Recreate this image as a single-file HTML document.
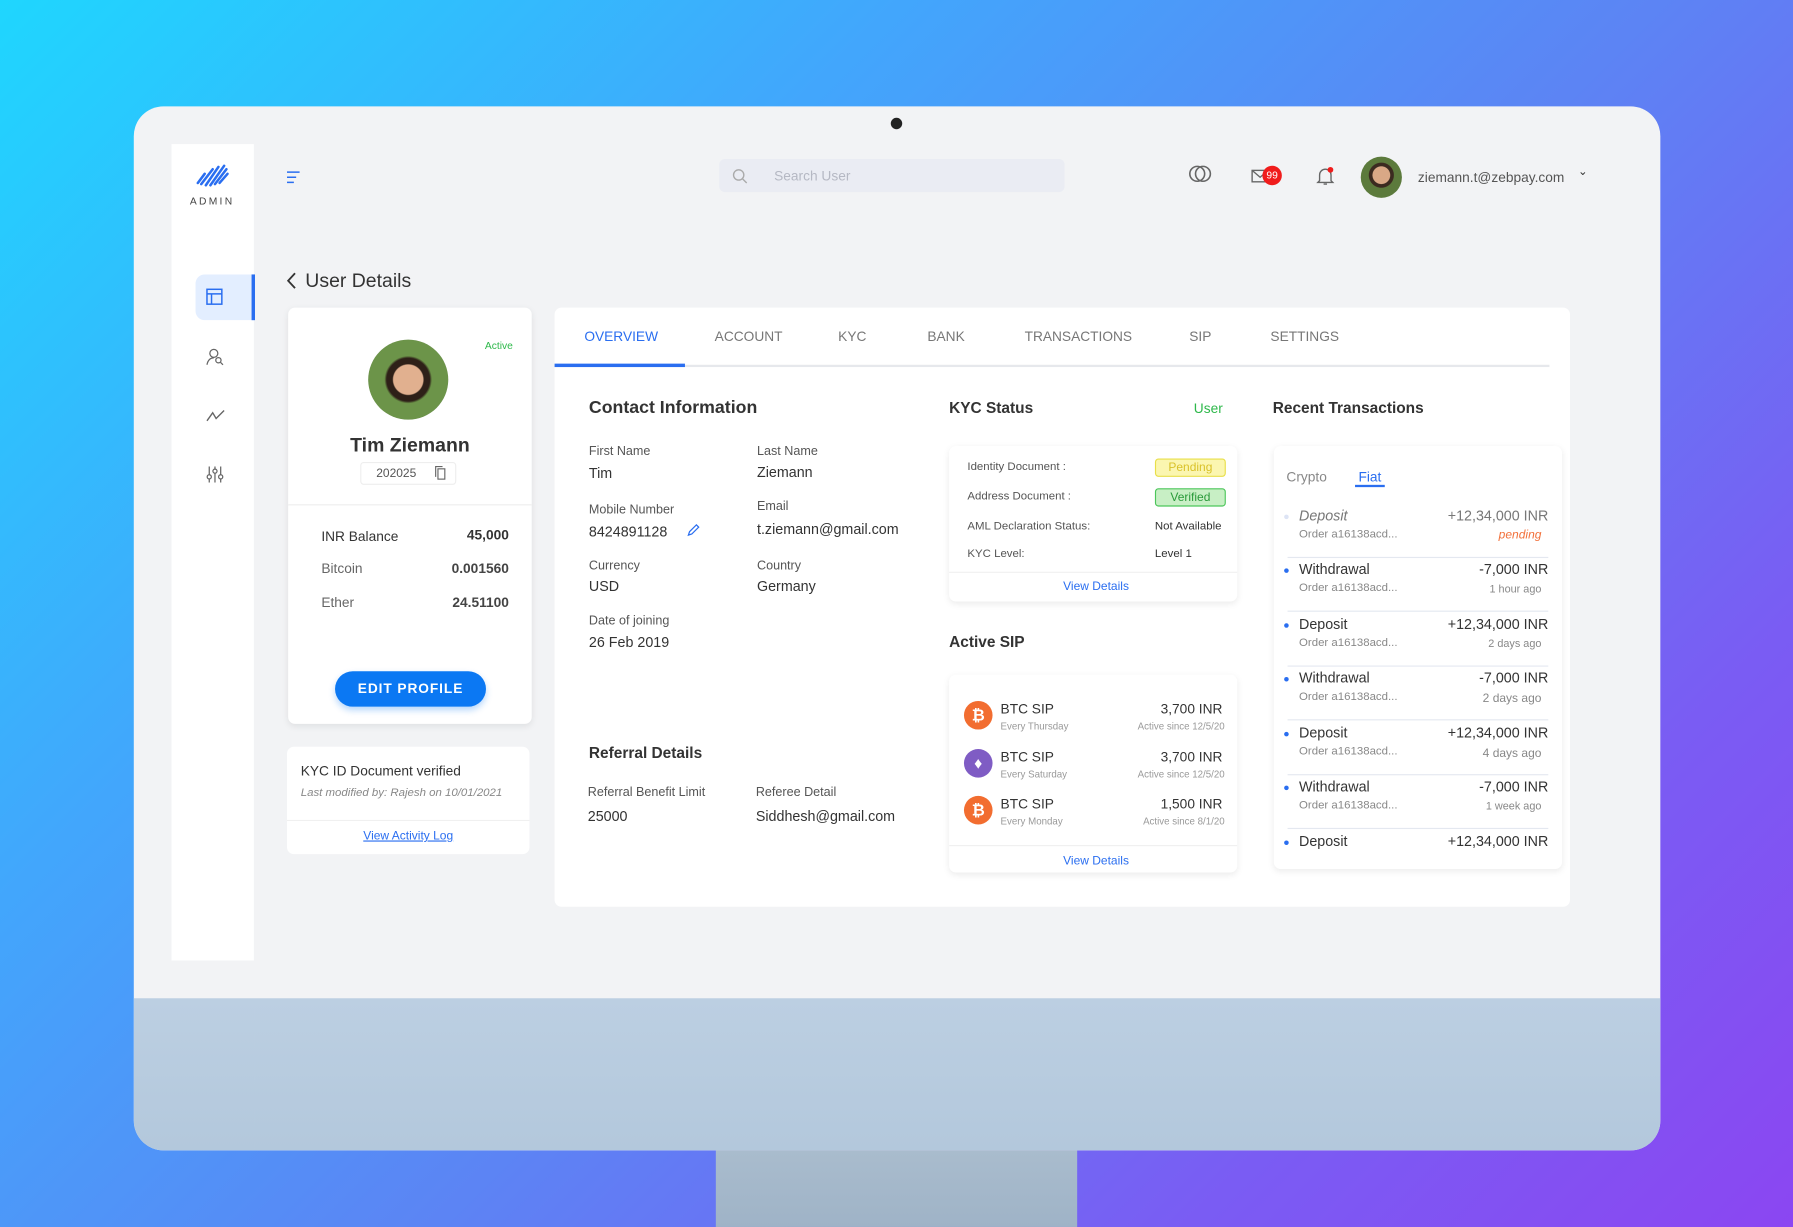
<!DOCTYPE html>
<html><head><meta charset="utf-8"><style>
*{box-sizing:border-box;margin:0;padding:0}
html,body{width:1793px;height:1227px;overflow:hidden}
body{background:linear-gradient(135deg,#1fd6fe 0%,#42a6fc 30%,#5c84f4 55%,#7a5cf3 80%,#8b46f2 100%);font-family:"Liberation Sans",sans-serif;color:#333}
#w{position:absolute;left:0;top:0;width:1568px;height:1073px;transform:scale(1.14349);transform-origin:0 0}
.a{position:absolute}
.mon{left:117px;top:93px;width:1335px;height:913px;border-radius:26px;background:#f2f3f5;overflow:hidden}
.chin{left:0;top:780px;width:1335px;height:133px;background:linear-gradient(#bccfe2,#b3c8dc)}
.stand{left:626px;top:1006px;width:316px;height:67px;background:linear-gradient(#a9bccd,#9fb3c7)}
.card{background:#fff;border-radius:6px;box-shadow:0 2px 6px rgba(0,0,0,.08)}
.lbl{font-size:11px;color:#555}
.val{font-size:12.5px;color:#333}
.tab{font-size:12px;color:#777;top:287px}
.h{font-weight:bold;color:#333}
.badge{font-size:10.5px;text-align:center;border-radius:3px;width:62px;height:16px;line-height:14px}
.tx{left:1126px;width:228px;height:44px;border-bottom:1px solid #e4e8f0}
.tx .n{position:absolute;left:10px;top:0;font-size:12.5px;color:#333}
.tx .d{position:absolute;left:-3px;top:6px;width:4px;height:4px;border-radius:50%;background:#2a6ef0}
.tx .o{position:absolute;left:10px;top:18px;font-size:10px;color:#888}
.tx .m{position:absolute;right:0;top:0;font-size:12.5px;color:#333}
.tx .t{position:absolute;right:6px;top:19px;font-size:9.5px;color:#888}
.sip .ic{position:absolute;left:0;width:25px;height:25px;border-radius:50%;background:#f26d30;color:#fff;font-weight:bold;font-size:14px;text-align:center;line-height:25px}
</style></head><body><div id="w">
<div class="a mon">
 <div class="a chin"></div>
</div>
<div class="a stand"></div>
<div class="a" style="left:779px;top:103px;width:10px;height:10px;border-radius:50%;background:#222"></div>

<div class="a" style="left:150px;top:126px;width:72px;height:714px;background:#fff"></div>
<svg class="a" style="left:170px;top:140px" width="32" height="24" viewBox="0 0 32 24"><g stroke="#2a6ef0" stroke-width="2.2" stroke-linecap="round"><path d="M3 20 L9 12"/><path d="M6 21 L16 8"/><path d="M10 22 L21 6"/><path d="M14 22 L26 5"/><path d="M18 21 L28 8"/><path d="M22 20 L29 12"/></g></svg>
<div class="a" style="left:166px;top:171px;font-size:9px;letter-spacing:2px;color:#444">ADMIN</div>
<div class="a" style="left:171px;top:240px;width:52px;height:40px;background:#e3eeff;border-radius:8px 0 0 8px"></div>
<div class="a" style="left:220px;top:240px;width:3px;height:40px;background:#2a6ef0"></div>
<svg class="a" style="left:180px;top:252px" width="15" height="15"><rect x="1" y="1" width="13" height="13" fill="none" stroke="#2a6ef0" stroke-width="1.3"/><path d="M1 5H14M5 5V14" stroke="#2a6ef0" stroke-width="1.3"/></svg>
<svg class="a" style="left:180px;top:304px" width="16" height="16" fill="none" stroke="#666" stroke-width="1.1"><circle cx="7" cy="5" r="3.5"/><path d="M1 15c1-5 4-6 6-6"/><circle cx="11" cy="11" r="2.3"/><path d="M12.8 12.8L15 15"/></svg>
<svg class="a" style="left:180px;top:357px" width="17" height="12" fill="none" stroke="#666" stroke-width="1.2"><path d="M1 11L6 4L9 9L16 2"/></svg>
<svg class="a" style="left:180px;top:407px" width="16" height="16" fill="none" stroke="#666" stroke-width="1.1"><path d="M3 1V15M8 1V15M13 1V15"/><circle cx="3" cy="10" r="1.8" fill="#fff"/><circle cx="8" cy="5" r="1.8" fill="#fff"/><circle cx="13" cy="10" r="1.8" fill="#fff"/></svg>

<svg class="a" style="left:250px;top:149px" width="13" height="12"><path d="M1 1.5H12M1 6H9M1 10.5H7" stroke="#2a6ef0" stroke-width="1.3"/></svg>
<div class="a" style="left:629px;top:139px;width:302px;height:29px;background:#eaecf3;border-radius:5px"></div>
<svg class="a" style="left:640px;top:147px" width="14" height="14" fill="none" stroke="#aaa" stroke-width="1.2"><circle cx="6" cy="6" r="4.5"/><path d="M9.5 9.5L13 13"/></svg>
<div class="a" style="left:677px;top:147px;font-size:12px;color:#b5b8c3">Search User</div>
<svg class="a" style="left:1039px;top:144px" width="22" height="16" fill="none" stroke="#666" stroke-width="1.4"><circle cx="8" cy="8" r="6.5"/><circle cx="13" cy="8" r="6.5"/></svg>
<svg class="a" style="left:1094px;top:148px" width="16" height="12" fill="none" stroke="#666" stroke-width="1.2"><rect x="1" y="1" width="14" height="10"/><path d="M1 1L8 7L15 1"/></svg>
<div class="a" style="left:1104px;top:145px;width:17px;height:17px;border-radius:50%;background:#f01c1c;color:#fff;font-size:9px;text-align:center;line-height:17px">99</div>
<svg class="a" style="left:1151px;top:145px" width="16" height="18" fill="none" stroke="#666" stroke-width="1.2"><path d="M3 13V8a5 5 0 0 1 10 0v5l1.5 1.5h-13z"/><path d="M6.5 16h3"/></svg>
<div class="a" style="left:1161px;top:146px;width:5px;height:5px;border-radius:50%;background:#f01c1c"></div>
<div class="a" style="left:1190px;top:137px;width:36px;height:36px;border-radius:50%;background:radial-gradient(circle at 50% 45%,#d9a886 0 28%,#3b2a20 30% 40%,#5c7a3c 42%)"></div>
<div class="a" style="left:1240px;top:148px;font-size:12px;color:#555">ziemann.t@zebpay.com</div>
<div class="a" style="left:1380px;top:145px;font-size:10px;color:#333">&#8964;</div>

<svg class="a" style="left:250px;top:238px" width="10" height="15"><path d="M8 1L2 7.5L8 14" fill="none" stroke="#333" stroke-width="1.6"/></svg>
<div class="a" style="left:267px;top:236px;font-size:17px;color:#333">User Details</div>

<div class="a card" style="left:252px;top:269px;width:213px;height:364px"></div>
<div class="a" style="left:322px;top:297px;width:70px;height:70px;border-radius:50%;background:radial-gradient(ellipse at 50% 50%,#e1b08f 0 26%,#2e2018 28% 38%,#6c9449 42% 70%,#4b6d32 72%)"></div>
<div class="a" style="left:424px;top:297px;font-size:9px;color:#2db84a">Active</div>
<div class="a h" style="left:252px;top:380px;width:213px;text-align:center;font-size:17px">Tim Ziemann</div>
<div class="a" style="left:315px;top:404px;width:84px;height:20px;border:1px solid #eee;border-radius:3px"></div>
<div class="a" style="left:329px;top:408px;font-size:10.5px;color:#555">202025</div>
<svg class="a" style="left:380px;top:407px" width="10" height="13" fill="none" stroke="#666" stroke-width="1"><rect x="3" y="3" width="6" height="9"/><path d="M1 10V1H7"/></svg>
<div class="a" style="left:252px;top:441px;width:213px;height:1px;background:#eee"></div>
<div class="a" style="left:281px;top:462px;font-size:12px;color:#333">INR Balance</div><div class="a h" style="right:1123px;top:461px;font-size:12px">45,000</div>
<div class="a" style="left:281px;top:490px;font-size:12px;color:#666">Bitcoin</div><div class="a h" style="right:1123px;top:490px;font-size:12px;color:#444">0.001560</div>
<div class="a" style="left:281px;top:520px;font-size:12px;color:#666">Ether</div><div class="a h" style="right:1123px;top:520px;font-size:12px;color:#444">24.51100</div>
<div class="a" style="left:293px;top:587px;width:132px;height:31px;border-radius:16px;background:#0b78f3;color:#fff;font-size:12px;font-weight:bold;letter-spacing:.8px;text-align:center;line-height:31px;box-shadow:0 3px 6px rgba(11,120,243,.3)">EDIT PROFILE</div>

<div class="a card" style="left:251px;top:653px;width:212px;height:94px;box-shadow:none"></div>
<div class="a" style="left:263px;top:667px;font-size:12px;color:#333">KYC ID Document verified</div>
<div class="a" style="left:263px;top:688px;font-size:10px;color:#888;font-style:italic">Last modified by: Rajesh on 10/01/2021</div>
<div class="a" style="left:251px;top:717px;width:212px;height:1px;background:#f0f0f0"></div>
<div class="a" style="left:251px;top:725px;width:212px;text-align:center;font-size:10.5px;color:#2a6ef0;text-decoration:underline">View Activity Log</div>

<div class="a card" style="left:485px;top:269px;width:888px;height:524px;box-shadow:none"></div>
<div class="a tab" style="left:511px;color:#2a6ef0">OVERVIEW</div>
<div class="a tab" style="left:625px">ACCOUNT</div>
<div class="a tab" style="left:733px">KYC</div>
<div class="a tab" style="left:811px">BANK</div>
<div class="a tab" style="left:896px">TRANSACTIONS</div>
<div class="a tab" style="left:1040px">SIP</div>
<div class="a tab" style="left:1111px">SETTINGS</div>
<div class="a" style="left:485px;top:319px;width:870px;height:2px;background:#e6e8ec"></div>
<div class="a" style="left:485px;top:318px;width:114px;height:3px;background:#2a6ef0"></div>

<div class="a h" style="left:515px;top:348px;font-size:15.5px">Contact Information</div>
<div class="a lbl" style="left:515px;top:389px">First Name</div><div class="a val" style="left:515px;top:407px">Tim</div>
<div class="a lbl" style="left:662px;top:389px">Last Name</div><div class="a val" style="left:662px;top:406px">Ziemann</div>
<div class="a lbl" style="left:515px;top:440px">Mobile Number</div><div class="a val" style="left:515px;top:458px">8424891128</div>
<svg class="a" style="left:600px;top:458px" width="12" height="12" fill="none" stroke="#2a6ef0" stroke-width="1.1"><path d="M2 10L3 7L9 1L11 3L5 9Z"/></svg>
<div class="a lbl" style="left:662px;top:437px">Email</div><div class="a val" style="left:662px;top:456px">t.ziemann@gmail.com</div>
<div class="a lbl" style="left:515px;top:489px">Currency</div><div class="a val" style="left:515px;top:506px">USD</div>
<div class="a lbl" style="left:662px;top:489px">Country</div><div class="a val" style="left:662px;top:506px">Germany</div>
<div class="a lbl" style="left:515px;top:537px">Date of joining</div><div class="a val" style="left:515px;top:555px">26 Feb 2019</div>
<div class="a h" style="left:515px;top:651px;font-size:13.5px">Referral Details</div>
<div class="a lbl" style="left:514px;top:687px">Referral Benefit Limit</div><div class="a val" style="left:514px;top:707px">25000</div>
<div class="a lbl" style="left:661px;top:687px">Referee Detail</div><div class="a val" style="left:661px;top:707px">Siddhesh@gmail.com</div>

<div class="a h" style="left:830px;top:349px;font-size:13.5px">KYC Status</div>
<div class="a" style="left:1044px;top:350px;font-size:12px;color:#2db84a">User</div>
<div class="a card" style="left:830px;top:390px;width:252px;height:136px"></div>
<div class="a lbl" style="left:846px;top:403px;font-size:10px">Identity Document :</div>
<div class="a badge" style="left:1010px;top:401px;background:#fbf6b0;border:1px solid #e8df4a;color:#d9c22a">Pending</div>
<div class="a lbl" style="left:846px;top:429px;font-size:10px">Address Document :</div>
<div class="a badge" style="left:1010px;top:427px;background:#c8efc5;border:1px solid #4cc65a;color:#2a9a3a">Verified</div>
<div class="a lbl" style="left:846px;top:455px;font-size:10px">AML Declaration Status:</div><div class="a" style="left:1010px;top:455px;font-size:10px;color:#333">Not Available</div>
<div class="a lbl" style="left:846px;top:479px;font-size:10px">KYC Level:</div><div class="a" style="left:1010px;top:479px;font-size:10px;color:#333">Level 1</div>
<div class="a" style="left:830px;top:500px;width:252px;height:1px;background:#f0f0f0"></div>
<div class="a" style="left:830px;top:507px;width:257px;text-align:center;font-size:10.5px;color:#2a6ef0">View Details</div>

<div class="a h" style="left:830px;top:554px;font-size:13.5px">Active SIP</div>
<div class="a card" style="left:830px;top:590px;width:252px;height:173px"></div>
<div class="a sip" style="left:843px;top:613px;width:228px;height:140px">
 <div class="ic" style="top:0">&#8383;</div>
 <div class="a" style="left:32px;top:0;font-size:12px">BTC SIP</div><div class="a" style="left:32px;top:17px;font-size:8.5px;color:#999">Every Thursday</div>
 <div class="a" style="right:2px;top:0;font-size:12px">3,700 INR</div><div class="a" style="right:0;top:17px;font-size:8.5px;color:#999">Active since 12/5/20</div>
 <div class="ic" style="top:42px;background:#7f5cc4">&#9830;</div>
 <div class="a" style="left:32px;top:42px;font-size:12px">BTC SIP</div><div class="a" style="left:32px;top:59px;font-size:8.5px;color:#999">Every Saturday</div>
 <div class="a" style="right:2px;top:42px;font-size:12px">3,700 INR</div><div class="a" style="right:0;top:59px;font-size:8.5px;color:#999">Active since 12/5/20</div>
 <div class="ic" style="top:83px">&#8383;</div>
 <div class="a" style="left:32px;top:83px;font-size:12px">BTC SIP</div><div class="a" style="left:32px;top:100px;font-size:8.5px;color:#999">Every Monday</div>
 <div class="a" style="right:2px;top:83px;font-size:12px">1,500 INR</div><div class="a" style="right:0;top:100px;font-size:8.5px;color:#999">Active since 8/1/20</div>
</div>
<div class="a" style="left:830px;top:739px;width:252px;height:1px;background:#f0f0f0"></div>
<div class="a" style="left:830px;top:747px;width:257px;text-align:center;font-size:10.5px;color:#2a6ef0">View Details</div>

<div class="a h" style="left:1113px;top:349px;font-size:13.5px">Recent Transactions</div>
<div class="a card" style="left:1114px;top:390px;width:252px;height:370px"></div>
<div class="a" style="left:1125px;top:410px;font-size:12px;color:#888">Crypto</div>
<div class="a" style="left:1188px;top:410px;font-size:12px;color:#2a6ef0">Fiat</div>
<div class="a" style="left:1185px;top:424px;width:26px;height:2px;background:#2a6ef0"></div>
<div class="a tx" style="top:444px"><div class="d" style="background:#dde4f5"></div><div class="n" style="font-style:italic;color:#777">Deposit</div><div class="o">Order a16138acd...</div><div class="m" style="color:#777">+12,34,000 INR</div><div class="t" style="color:#f2703a;font-style:italic;font-size:10.5px;top:18px">pending</div></div>
<div class="a tx" style="top:491px"><div class="d"></div><div class="n">Withdrawal</div><div class="o">Order a16138acd...</div><div class="m">-7,000 INR</div><div class="t">1 hour ago</div></div>
<div class="a tx" style="top:539px"><div class="d"></div><div class="n">Deposit</div><div class="o">Order a16138acd...</div><div class="m">+12,34,000 INR</div><div class="t">2 days ago</div></div>
<div class="a tx" style="top:586px"><div class="d"></div><div class="n">Withdrawal</div><div class="o">Order a16138acd...</div><div class="m">-7,000 INR</div><div class="t" style="font-size:10.5px">2 days ago</div></div>
<div class="a tx" style="top:634px"><div class="d"></div><div class="n">Deposit</div><div class="o">Order a16138acd...</div><div class="m">+12,34,000 INR</div><div class="t" style="font-size:10.5px">4 days ago</div></div>
<div class="a tx" style="top:681px"><div class="d"></div><div class="n">Withdrawal</div><div class="o">Order a16138acd...</div><div class="m">-7,000 INR</div><div class="t">1 week ago</div></div>
<div class="a tx" style="top:729px;border:none"><div class="d"></div><div class="n">Deposit</div><div class="m">+12,34,000 INR</div></div>
</div></body></html>
